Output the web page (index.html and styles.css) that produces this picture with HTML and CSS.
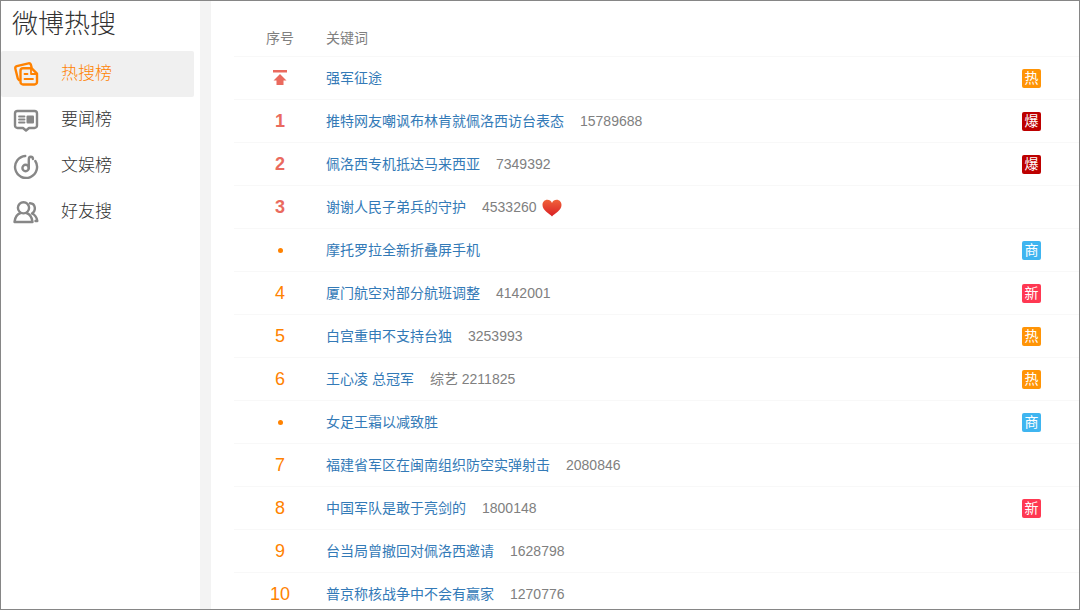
FILE: index.html
```html
<!DOCTYPE html>
<html lang="zh-CN">

<head>
    <meta charset="UTF-8">
    <meta name="viewport" content="width=device-width, initial-scale=1.0">
    <title>微博热搜</title>
    <link rel="stylesheet" href="styles.css">
</head>

<body>
    <div class="page">
        <aside class="sidebar">
            <h1>微博热搜</h1>
            <nav>
                <a class="nav-item active" href="#">
                    <svg class="icon" viewBox="0 0 26 26">
                        <path d="M6 19 4.800 17.500 2.300 7.500a2 2 0 0 1 1.500-2.400L15.500 2.300a2 2 0 0 1 2.300 1.200L18.500 6" />
                        <path d="M10 7.200h8.500l5.500 5.500v8.300a2.500 2.500 0 0 1-2.500 2.500H10A2.500 2.500 0 0 1 7.500 21V9.700A2.500 2.500 0 0 1 10 7.200z" />
                        <path class="thin" d="M18 7.500v5.500h5.500M11.500 13h3M11.500 18h8.500" />
                    </svg>
                    <span>热搜榜</span>
                </a>
                <a class="nav-item" href="#">
                    <svg class="icon" viewBox="0 0 26 26">
                        <path d="M4.500 4h17A2.500 2.500 0 0 1 24 6.500v12a2.500 2.500 0 0 1-2.500 2.500H16l-3 2.500-3-2.500H4.500A2.500 2.500 0 0 1 2 18.500v-12A2.500 2.500 0 0 1 4.500 4z" />
                        <path class="thin" d="M6 9.500h5.500M6 12.500h5.500M6 15.500h5.500" />
                        <rect class="solid" x="13.500" y="8.500" width="7.500" height="8" rx="1" />
                    </svg>
                    <span>要闻榜</span>
                </a>
                <a class="nav-item" href="#">
                    <svg class="icon" viewBox="0 0 26 26">
                        <path d="M12.300 3A11 11 0 1 0 22.300 8" />
                        <circle cx="12.600" cy="15" r="3.200" />
                        <path d="M15.800 15V6.500c0-3.500 3.800-3.500 4.200-.5" />
                    </svg>
                    <span>文娱榜</span>
                </a>
                <a class="nav-item" href="#">
                    <svg class="icon" viewBox="0 0 26 26">
                        <circle cx="10.500" cy="8.800" r="5.600" />
                        <path d="M7.500 14C4 15.200 2 18.500 1.500 23H19.500c-.5-4.500-2.500-7.800-6-9" />
                        <path d="M17 4.200c5.500.2 6.500 7.300 2 10.300 3 1.200 4.800 4 5.300 7.500H22.500" />
                    </svg>
                    <span>好友搜</span>
                </a>
            </nav>
        </aside>

        <main class="content">
            <table>
                <thead>
                    <tr>
                        <th class="rank">序号</th>
                        <th>关键词</th>
                        <th class="mark"></th>
                    </tr>
                </thead>
                <tbody>
                    <tr>
                        <td class="rank top">
                            <svg class="pin" viewBox="0 0 14 16">
                                <path d="M0 0h14v2.500H0zM7 4l6.500 6.500H10.500V15h-7v-4.500H.5z" />
                            </svg>
                        </td>
                        <td><a href="#">强军征途</a></td>
                        <td class="mark"><span class="tag hot">热</span></td>
                    </tr>
                    <tr>
                        <td class="rank top">1</td>
                        <td><a href="#">推特网友嘲讽布林肯就佩洛西访台表态</a><span class="count">15789688</span></td>
                        <td class="mark"><span class="tag boom">爆</span></td>
                    </tr>
                    <tr>
                        <td class="rank top">2</td>
                        <td><a href="#">佩洛西专机抵达马来西亚</a><span class="count">7349392</span></td>
                        <td class="mark"><span class="tag boom">爆</span></td>
                    </tr>
                    <tr>
                        <td class="rank top">3</td>
                        <td><a href="#">谢谢人民子弟兵的守护</a><span class="count">4533260</span><svg class="heart" viewBox="0 0 20 18">
                                <defs>
                                    <linearGradient id="heartFill" x1="0" y1="0" x2="0" y2="1">
                                        <stop offset="0" stop-color="#f0623a" />
                                        <stop offset="1" stop-color="#d91f24" />
                                    </linearGradient>
                                </defs>
                                <path fill="url(#heartFill)" d="M10 17.500C7.500 14.500.5 11.500.5 6 .5 3 2.700.8 5.300.8 7.400.8 9.200 2 10 4c.8-2 2.600-3.200 4.700-3.200 2.600 0 4.800 2.200 4.800 5.200 0 5.500-7 8.500-9.500 11.500z" />
                            </svg></td>
                        <td class="mark"></td>
                    </tr>
                    <tr>
                        <td class="rank"><span class="dot"></span></td>
                        <td><a href="#">摩托罗拉全新折叠屏手机</a></td>
                        <td class="mark"><span class="tag ad">商</span></td>
                    </tr>
                    <tr>
                        <td class="rank">4</td>
                        <td><a href="#">厦门航空对部分航班调整</a><span class="count">4142001</span></td>
                        <td class="mark"><span class="tag new">新</span></td>
                    </tr>
                    <tr>
                        <td class="rank">5</td>
                        <td><a href="#">白宫重申不支持台独</a><span class="count">3253993</span></td>
                        <td class="mark"><span class="tag hot">热</span></td>
                    </tr>
                    <tr>
                        <td class="rank">6</td>
                        <td><a href="#">王心凌 总冠军</a><span class="count">综艺 2211825</span></td>
                        <td class="mark"><span class="tag hot">热</span></td>
                    </tr>
                    <tr>
                        <td class="rank"><span class="dot"></span></td>
                        <td><a href="#">女足王霜以减致胜</a></td>
                        <td class="mark"><span class="tag ad">商</span></td>
                    </tr>
                    <tr>
                        <td class="rank">7</td>
                        <td><a href="#">福建省军区在闽南组织防空实弹射击</a><span class="count">2080846</span></td>
                        <td class="mark"></td>
                    </tr>
                    <tr>
                        <td class="rank">8</td>
                        <td><a href="#">中国军队是敢于亮剑的</a><span class="count">1800148</span></td>
                        <td class="mark"><span class="tag new">新</span></td>
                    </tr>
                    <tr>
                        <td class="rank">9</td>
                        <td><a href="#">台当局曾撤回对佩洛西邀请</a><span class="count">1628798</span></td>
                        <td class="mark"></td>
                    </tr>
                    <tr>
                        <td class="rank">10</td>
                        <td><a href="#">普京称核战争中不会有赢家</a><span class="count">1270776</span></td>
                        <td class="mark"></td>
                    </tr>
                </tbody>
            </table>
        </main>
    </div>
</body>

</html>
```

FILE: styles.css
```css
* {
    box-sizing: border-box;
}

body {
    margin: 0;
    font-family: "Liberation Sans", "Noto Sans CJK SC", sans-serif;
    font-size: 14px;
    color: #333;
}

a {
    text-decoration: none;
}

.page {
    display: flex;
    height: 100vh;
    overflow: hidden;
    border: 1px solid #868686;
    background: #fff;
}

/* sidebar */
.sidebar {
    flex: 0 0 210px;
    padding-right: 6px;
    border-right: 11px solid #f3f3f3;
}

h1 {
    margin: 0;
    padding: 3px 11px 7px;
    font-size: 26px;
    font-weight: 300;
    line-height: 40px;
}

.nav-item {
    display: flex;
    align-items: center;
    gap: 22px;
    height: 46px;
    padding: 0 12px;
    border-radius: 2px;
    font-size: 17px;
    font-weight: 300;
    line-height: 24px;
    color: #333;
}

.nav-item.active {
    background: #f0f0f0;
    color: #ff8200;
}

.icon {
    width: 26px;
    height: 26px;
    fill: none;
    stroke: #878787;
    stroke-width: 2.4;
    stroke-linecap: round;
    stroke-linejoin: round;
}

.active .icon {
    stroke: #ff8200;
}

.icon .thin {
    stroke-width: 1.8;
}

.icon .solid {
    fill: #878787;
    stroke: none;
}

/* list */
.content {
    flex: 1;
    padding: 18px 0 0 23px;
}

table {
    width: 100%;
    border-collapse: separate;
    border-spacing: 0;
}

th,
td {
    height: 43px;
    padding: 0;
    border-bottom: 1px solid #f8f8f8;
    text-align: left;
    line-height: 20px;
}

th {
    height: 38px;
    font-weight: normal;
    color: #808080;
}

td a {
    color: #337ab7;
}

.rank {
    width: 92px;
    text-align: center;
}

td.rank {
    font-size: 18px;
    color: #ff8200;
}

td.rank.top {
    font-weight: bold;
    color: #ea6a5e;
}

.pin {
    display: block;
    width: 14px;
    height: 16px;
    margin: 0 auto;
    fill: #ea6a5e;
}

.dot {
    display: block;
    width: 5px;
    height: 5px;
    margin: 0 auto;
    border-radius: 50%;
    background: #ff8200;
}

.count {
    margin-left: 16px;
    color: #808080;
}

.heart {
    width: 20px;
    height: 18px;
    margin-left: 5px;
    vertical-align: middle;
}

.mark {
    width: 57px;
}

.tag {
    display: block;
    width: 19px;
    height: 19px;
    border-radius: 2px;
    font-size: 14px;
    line-height: 19px;
    text-align: center;
    color: #fff;
}

.hot {
    background: #ff9406;
}

.boom {
    background: #bd0000;
}

.ad {
    background: #3fb5f0;
}

.new {
    background: #ff3852;
}
```
